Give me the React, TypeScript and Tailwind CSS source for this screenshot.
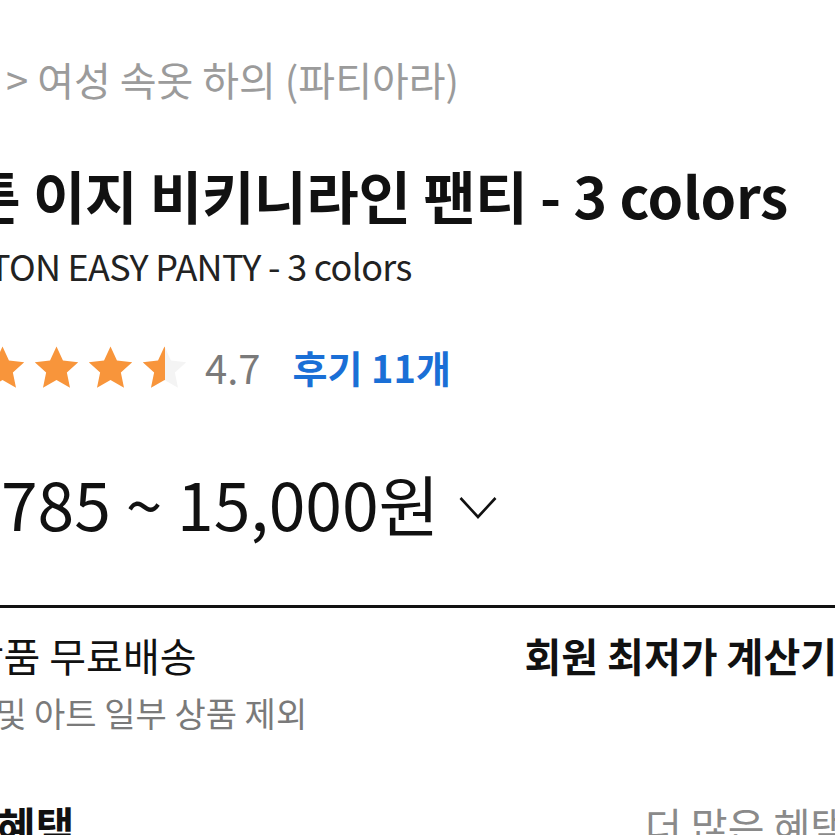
const font = { fontFamily: '"Noto Sans CJK KR", "Noto Sans", sans-serif' };

const starPath =
  "M12 0.8l3.3 7.1 7.8 0.9-5.8 5.3 1.6 7.7L12 17.9l-6.9 3.9 1.6-7.7L0.9 8.8l7.8-0.9z";

function Star({ fill }: { fill: "full" | "half" }) {
  return (
    <svg width="47" height="45" viewBox="0 0 24 23" className="shrink-0">
      <defs>
        <clipPath id="half-star">
          <rect x="0" y="0" width="12.2" height="23" />
        </clipPath>
      </defs>
      <path d={starPath} fill={fill === "full" ? "#f8953b" : "#f4f4f4"} />
      {fill === "half" && (
        <path d={starPath} fill="#f8953b" clipPath="url(#half-star)" />
      )}
    </svg>
  );
}

export default function App() {
  return (
    <div
      className="w-[835px] h-[835px] overflow-hidden bg-white text-[#111]"
      style={font}>
      {/* breadcrumb */}
      <div className="h-[158px] flex items-center whitespace-nowrap">
        <span className="ml-[6px] text-[40px] leading-none text-[#9b9b9b]">
          &gt; 여성 속옷 하의 (파티아라)
        </span>
      </div>

      {/* title */}
      <div className="h-[72px] flex items-center whitespace-nowrap">
        <h1 className="-ml-[84px] text-[57px] font-bold leading-none tracking-[-0.3px]">
          코튼 이지 비키니라인 팬티 - 3 colors
        </h1>
      </div>
      <div className="h-[70px] flex items-center whitespace-nowrap">
        <p className="-ml-[78px] text-[36px] leading-none tracking-[-0.7px] text-[#222]">
          COTTON EASY PANTY - 3 colors
        </p>
      </div>

      {/* rating */}
      <div className="h-[134px] flex items-center whitespace-nowrap">
        <div className="-ml-[75px] flex items-center gap-[7px]">
          <Star fill="full" />
          <Star fill="full" />
          <Star fill="full" />
          <Star fill="full" />
          <Star fill="half" />
        </div>
        <span className="ml-[17px] text-[40px] leading-none text-[#7a7a7a]">
          4.7
        </span>
        <span className="ml-[32px] text-[38px] font-bold leading-none text-[#1a6fd6]">
          후기 11개
        </span>
      </div>

      {/* price */}
      <div className="h-[136px] flex items-center whitespace-nowrap">
        <span className="-ml-[54px] text-[66px] leading-none">
          9,785 ~ 15,000원
        </span>
        <svg
          width="38"
          height="24"
          viewBox="0 0 38 24"
          className="ml-[20px] mt-[12px] shrink-0">
          <polyline
            points="1.5,2 19,21 36.5,2"
            fill="none"
            stroke="#111"
            strokeWidth="2.6"
          />
        </svg>
      </div>

      <div className="h-[35px]" />
      <div className="h-[3px] bg-[#111]" />

      {/* shipping */}
      <div className="h-[17px]" />
      <div className="h-[60px] flex items-center justify-between whitespace-nowrap">
        <span className="-ml-[79px] text-[40px] leading-none">
          전 상품 무료배송
        </span>
        <span className="-mr-[2px] text-[40px] font-bold leading-none">
          회원 최저가 계산기
        </span>
      </div>
      <div className="h-[56px] flex items-center whitespace-nowrap">
        <span className="-ml-[75px] text-[34px] leading-none text-[#7a7a7a]">
          뷰티 및 아트 일부 상품 제외
        </span>
      </div>

      {/* benefits */}
      <div className="h-[168px] flex items-center justify-between whitespace-nowrap">
        <span className="-ml-[3px] text-[42px] font-bold leading-none">
          혜택
        </span>
        <span className="-mr-[12px] text-[40px] leading-none text-[#8a8a8a]">
          더 많은 혜택
        </span>
      </div>
    </div>
  );
}
